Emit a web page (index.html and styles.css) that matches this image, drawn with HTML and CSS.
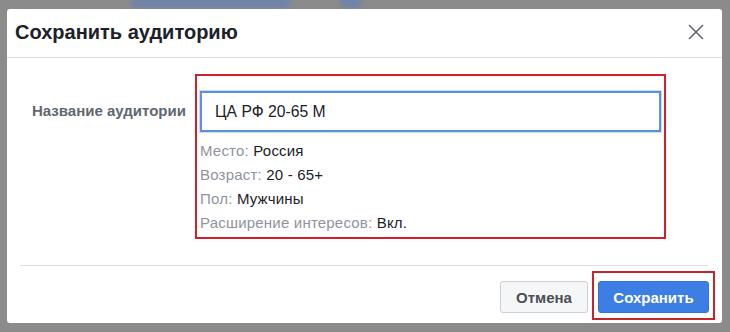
FILE: index.html
```html
<!DOCTYPE html>
<html lang="ru">
<head>
<meta charset="utf-8">
<link rel="stylesheet" href="styles.css">
</head>
<body>
<div class="backdrop">
  <div class="blob blob-a"></div>
  <div class="blob blob-b"></div>
  <div class="dialog">
    <div class="header">
      <div class="title">Сохранить аудиторию</div>
      <svg class="close" width="16" height="16" viewBox="0 0 16 16"><path d="M1 1L15 15M15 1L1 15" stroke="#606770" stroke-width="1.6" fill="none"/></svg>
    </div>
    <div class="body">
      <div class="label">Название аудитории</div>
      <div class="highlight">
        <div class="input">ЦА РФ 20-65 М</div>
        <div class="info">
          <div class="row"><span class="k">Место:</span> <span class="v">Россия</span></div>
          <div class="row"><span class="k">Возраст:</span> <span class="v">20 - 65+</span></div>
          <div class="row"><span class="k">Пол:</span> <span class="v">Мужчины</span></div>
          <div class="row"><span class="k">Расширение интересов:</span> <span class="v">Вкл.</span></div>
        </div>
      </div>
    </div>
    <div class="footer">
      <button class="btn cancel">Отмена</button>
      <div class="save-wrap"><button class="btn save">Сохранить</button></div>
    </div>
  </div>
</div>
</body>
</html>
```
FILE: styles.css
```css
html, body {
  margin: 0;
  padding: 0;
}
body {
  width: 730px;
  height: 332px;
  overflow: hidden;
  font-family: "Liberation Sans", Arial, sans-serif;
  background: #8b8b8b;
}
.backdrop {
  position: relative;
  width: 730px;
  height: 332px;
  padding: 9px 0 0 7px;
  box-sizing: border-box;
}
.blob {
  position: absolute;
  background: #6f84a8;
  filter: blur(2px);
  border-radius: 6px;
}
.blob-a { left: 130px; top: -4px; width: 160px; height: 12px; }
.blob-b { left: 340px; top: -4px; width: 22px; height: 12px; }
.dialog {
  position: relative;
  width: 715px;
  height: 314px;
  background: #fff;
  border-radius: 3px;
  display: flex;
  flex-direction: column;
}
.header {
  height: 48px;
  flex: none;
  border-bottom: 1px solid #dddfe2;
  display: flex;
  align-items: center;
  justify-content: space-between;
  padding: 0 18px 2px 8px;
  box-sizing: border-box;
  height: 49px;
}
.title {
  font-size: 20px;
  font-weight: bold;
  color: #1d2129;
}
.close {
  display: block;
}
.body {
  display: flex;
  flex: none;
  padding: 16px 0 0 25px;
  height: 207px;
  box-sizing: border-box;
}
.label {
  width: 163px;
  font-size: 15px;
  font-weight: bold;
  color: #606770;
  padding-top: 28px;
  white-space: nowrap;
}
.highlight {
  width: 471px;
  height: 165px;
  border: 2px solid #d0202a;
  padding: 15px 3px 0 3px;
  box-sizing: border-box;
}
.input {
  height: 41px;
  border: 2px solid #5b90e0;
  box-shadow: 0 0 0 1px #c6dbf7;
  box-sizing: border-box;
  padding: 0 0 0 13px;
  display: flex;
  align-items: center;
  font-size: 15.7px;
  color: #1d2129;
}
.info {
  padding-top: 8px;
  font-size: 15px;
  letter-spacing: 0.2px;
}
.row {
  height: 24px;
  line-height: 21px;
}
.k { color: #90949c; }
.v { color: #1d2129; }
.footer {
  margin: 0 14px 0 13px;
  border-top: 1px solid #dddfe2;
  display: flex;
  justify-content: flex-end;
  align-items: flex-start;
  padding-top: 5px;
  gap: 4px;
}
.btn {
  font-family: "Liberation Sans", Arial, sans-serif;
  font-size: 15px;
  font-weight: bold;
  border-radius: 3px;
  cursor: pointer;
}
.cancel {
  margin-top: 10px;
  width: 88px;
  height: 32px;
  background: #f5f6f7;
  border: 1px solid #ccd0d5;
  color: #4b4f56;
}
.save-wrap {
  border: 2px solid #c4252c;
  padding: 8px 4px 5px 4px;
  margin-right: -7px;
}
.save {
  display: block;
  width: 111px;
  height: 32px;
  background: #3c7ee4;
  border: 1px solid #3674d8;
  color: #fff;
}
```
